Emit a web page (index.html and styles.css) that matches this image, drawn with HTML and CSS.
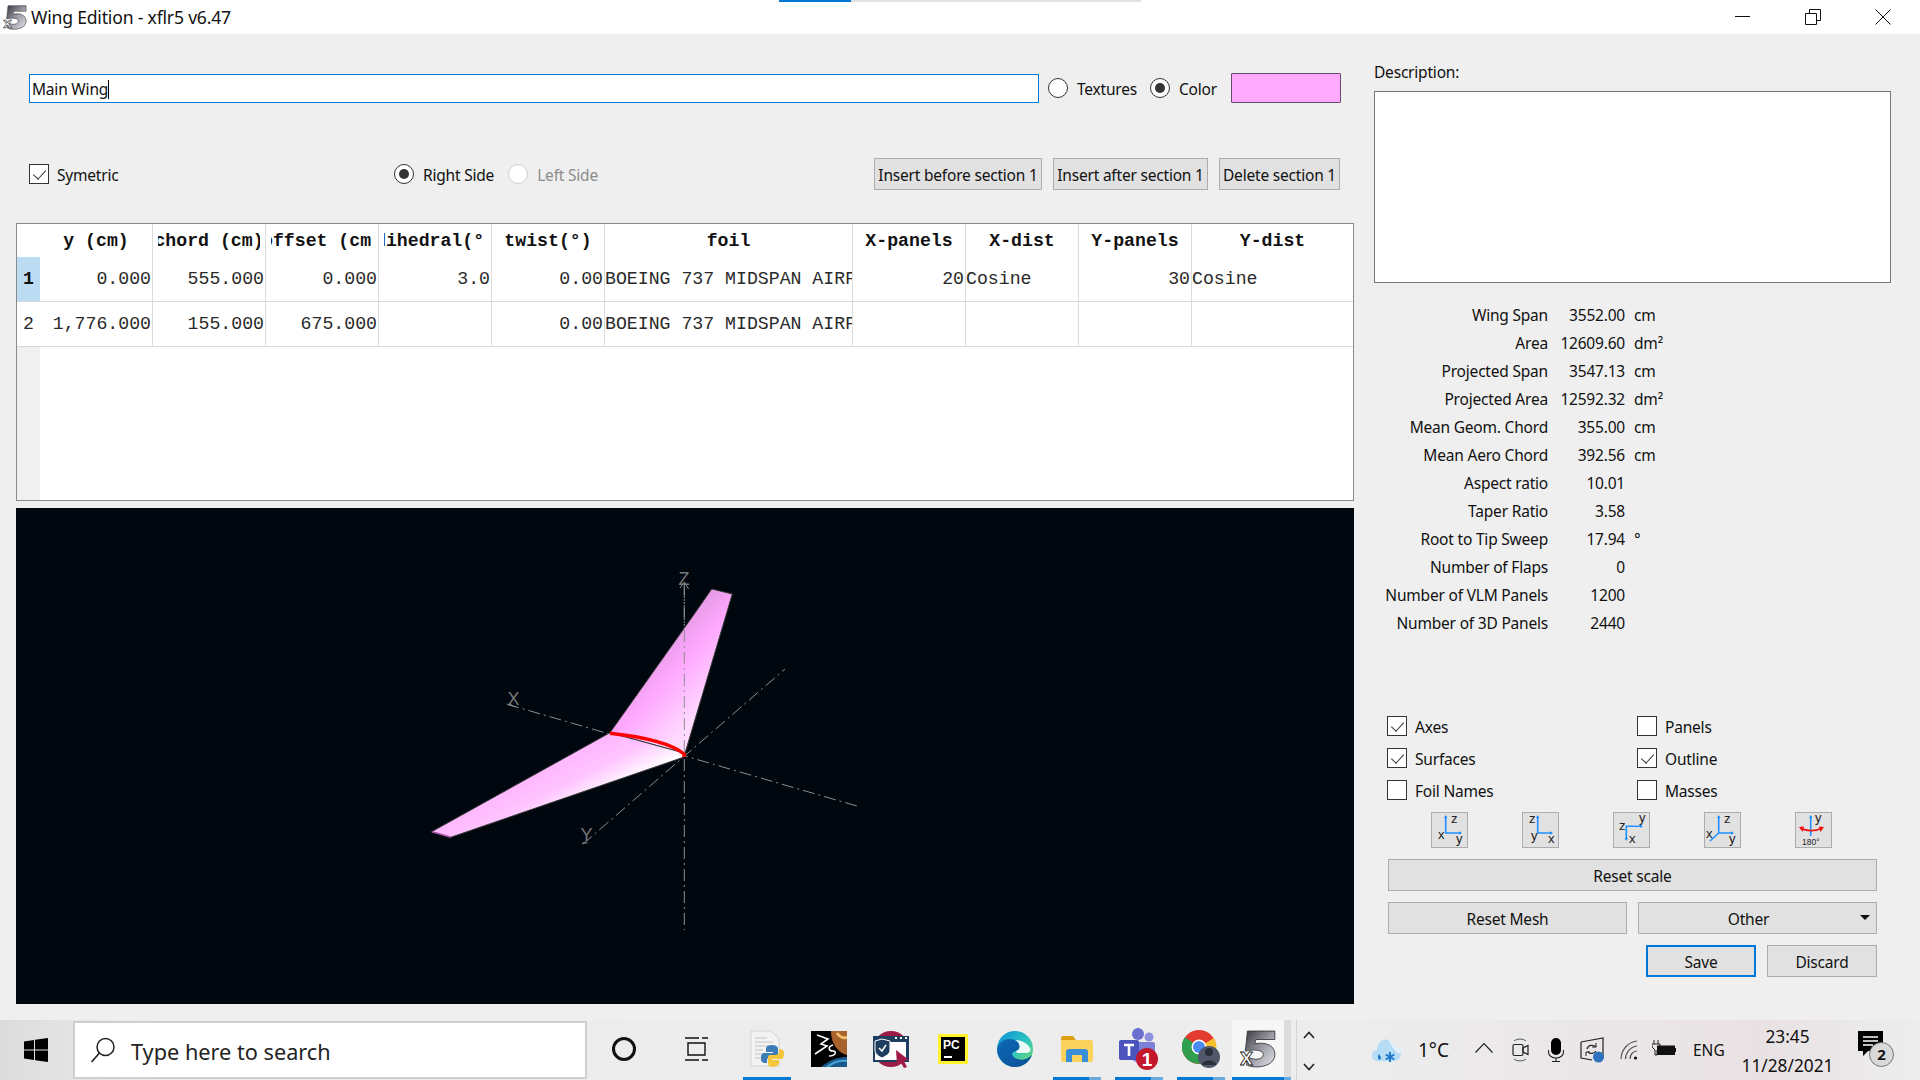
FILE: index.html
```html
<!DOCTYPE html>
<html lang="en">
<head>
<meta charset="utf-8">
<title>Wing Edition - xflr5 v6.47</title>
<link rel="stylesheet" href="styles.css">
</head>
<body>
<svg class="defs" width="0" height="0">
  <defs>
    <linearGradient id="g5" x1="0" y1="0" x2="1" y2="1"><stop offset="0" stop-color="#3a3a44"/><stop offset=".5" stop-color="#9a9aa4"/><stop offset="1" stop-color="#e6e6ee"/></linearGradient>
    <symbol id="logo" viewBox="0 0 34 36">
      <path d="M7 1H33V9H15L14 13C25 11 33 15 33 23C33 31 25 35 15 35C11 35 8 34 6 33L8 26C14 29 22 28 22 23C22 19 13 18 5 20Z" fill="url(#g5)" stroke="#333" stroke-width=".8"/>
      <text x="0" y="33" class="logo-x">x</text>
    </symbol>
  </defs>
</svg>

<header class="titlebar">
  <svg class="title-logo" width="24" height="25"><use href="#logo"/></svg>
  <span class="title-text">Wing Edition - xflr5 v6.47</span>
  <div class="progress"><div class="progress-on"></div></div>
  <div class="winctl">
    <svg width="16" height="16" viewBox="0 0 16 16"><path d="M0 7.5H15" class="wc"/></svg>
    <svg width="16" height="16" viewBox="0 0 16 16"><path d="M.5 4.5H11.5V15.5H.5ZM4.5 4.5V.5H15.5V11.5H11.5" class="wc"/></svg>
    <svg width="16" height="16" viewBox="0 0 16 16"><path d="M.5 .5L15.5 15.5M15.5 .5L.5 15.5" class="wc"/></svg>
  </div>
</header>

<main class="app">
  <section class="left">
    <div class="name-row">
      <div class="name-input">Main Wing<i class="caret"></i></div>
      <label class="opt o-tex"><span class="radio"></span>Textures</label>
      <label class="opt o-col"><span class="radio on"></span>Color</label>
      <div class="swatch"></div>
    </div>
    <div class="tool-row">
      <label class="opt o-sym"><span class="check on"></span>Symetric</label>
      <label class="opt o-right"><span class="radio on"></span>Right Side</label>
      <label class="opt o-left dis"><span class="radio dis"></span>Left Side</label>
      <div class="tool-btns">
        <button class="btn b-before">Insert before section 1</button>
        <button class="btn b-after">Insert after section 1</button>
        <button class="btn b-del">Delete section 1</button>
      </div>
    </div>

    <div class="table">
      <div class="tr thead">
        <div class="td rh"></div>
        <div class="td th"><span>y (cm)</span></div>
        <div class="td th"><span>chord (cm)</span></div>
        <div class="td th"><span>offset (cm)</span></div>
        <div class="td th"><span>dihedral(°)</span></div>
        <div class="td th"><span>twist(°)</span></div>
        <div class="td th"><span>foil</span></div>
        <div class="td th"><span>X-panels</span></div>
        <div class="td th"><span>X-dist</span></div>
        <div class="td th"><span>Y-panels</span></div>
        <div class="td th"><span>Y-dist</span></div>
      </div>
      <div class="tr">
        <div class="td rh sel">1</div>
        <div class="td n">0.000</div><div class="td n">555.000</div><div class="td n">0.000</div><div class="td n">3.0</div><div class="td n">0.00</div>
        <div class="td">BOEING 737 MIDSPAN AIRFOIL</div>
        <div class="td n">20</div><div class="td">Cosine</div><div class="td n">30</div><div class="td">Cosine</div>
      </div>
      <div class="tr">
        <div class="td rh">2</div>
        <div class="td n">1,776.000</div><div class="td n">155.000</div><div class="td n">675.000</div><div class="td n"></div><div class="td n">0.00</div>
        <div class="td">BOEING 737 MIDSPAN AIRFOIL</div>
        <div class="td"></div><div class="td"></div><div class="td"></div><div class="td"></div>
      </div>
      <div class="tfill"><div class="tfill-head"></div></div>
    </div>

    <div class="view3d">
      <svg width="1338" height="496" viewBox="16 508 1338 496">
        <defs>
          <linearGradient id="wu" gradientUnits="userSpaceOnUse" x1="650" y1="640" x2="715" y2="700"><stop offset="0" stop-color="#dc96dc"/><stop offset=".45" stop-color="#ffa8ff"/><stop offset="1" stop-color="#ffdcff"/></linearGradient>
          <linearGradient id="wl" gradientUnits="userSpaceOnUse" x1="545" y1="755" x2="575" y2="812"><stop offset="0" stop-color="#ffb0ff"/><stop offset=".55" stop-color="#ffc4ff"/><stop offset="1" stop-color="#ffffff"/></linearGradient>
        </defs>
        <g class="axis">
          <path d="M684.3 583V930"/>
          <path d="M507.3 704.3L859.3 806.7"/>
          <path d="M582.7 844.3L785 669"/>
        </g>
        <path d="M680 588L684.3 582L688.5 589M512 705L507.3 704.3L516 707M582 843L587.5 843" class="axhead"/>
        <path d="M711.7 589L732.3 594L685 753.3L610 732.7L695 613Z" fill="url(#wu)" stroke="#3a3a3a" stroke-width="1"/>
        <path d="M610 732.7L431.7 831.7L450.7 837.3L683.3 757.3L685 753.3Z" fill="url(#wl)" stroke="#3a3a3a" stroke-width="1"/>
        <path d="M431.7 831.7L450.7 837.3" stroke="#a050a0" stroke-width="1.5"/>
        <path d="M684.3 586V755" class="axis-front"/>
        <path d="M610 733.3C635 736 668 741 684 754L684 757" fill="none" stroke="#ff0000" stroke-width="3.5"/>
        <text x="684" y="585" class="axl">Z</text>
        <text x="513.5" y="705" class="axl">X</text>
        <text x="586.5" y="841" class="axl">Y</text>
      </svg>
    </div>
  </section>

  <aside class="right">
    <div class="desc-label">Description:</div>
    <div class="desc-box"></div>

    <div class="info">
      <span>Wing Span</span><b>3552.00</b><em>cm</em>
      <span>Area</span><b>12609.60</b><em>dm²</em>
      <span>Projected Span</span><b>3547.13</b><em>cm</em>
      <span>Projected Area</span><b>12592.32</b><em>dm²</em>
      <span>Mean Geom. Chord</span><b>355.00</b><em>cm</em>
      <span>Mean Aero Chord</span><b>392.56</b><em>cm</em>
      <span>Aspect ratio</span><b>10.01</b><em></em>
      <span>Taper Ratio</span><b>3.58</b><em></em>
      <span>Root to Tip Sweep</span><b>17.94</b><em>°</em>
      <span>Number of Flaps</span><b>0</b><em></em>
      <span>Number of VLM Panels</span><b>1200</b><em></em>
      <span>Number of 3D Panels</span><b>2440</b><em></em>
    </div>

    <div class="controls">
      <div class="checks">
        <label class="opt"><span class="check on"></span>Axes</label>
        <label class="opt"><span class="check"></span>Panels</label>
        <label class="opt"><span class="check on"></span>Surfaces</label>
        <label class="opt"><span class="check on"></span>Outline</label>
        <label class="opt"><span class="check"></span>Foil Names</label>
        <label class="opt"><span class="check"></span>Masses</label>
      </div>
      <div class="view-btns">
        <button class="vbtn"><svg width="35" height="34" viewBox="1 1 35 34">
          <path d="M14.7 4V21H30" class="ax"/><path d="M13 6L14.7 3L16.4 6ZM28 19.3L31 21L28 22.7Z" class="axf"/>
          <text x="20" y="11" class="vt">z</text><text x="7" y="27" class="vt">x</text><text x="25" y="31" class="vt">y</text></svg></button>
        <button class="vbtn"><svg width="35" height="34" viewBox="1 1 35 34">
          <path d="M15.7 4V21H30" class="ax"/><path d="M14 6L15.7 3L17.4 6ZM28 19.3L31 21L28 22.7Z" class="axf"/>
          <text x="7" y="11" class="vt">z</text><text x="9" y="28" class="vt">y</text><text x="26" y="31" class="vt">x</text></svg></button>
        <button class="vbtn"><svg width="35" height="34" viewBox="1 1 35 34">
          <path d="M13.3 28V14.3H29" class="ax"/><path d="M27 12.6L30 14.3L27 16ZM11.6 26L13.3 29L15 26Z" class="axf"/>
          <text x="6" y="18" class="vt">z</text><text x="26" y="10" class="vt">y</text><text x="16" y="31" class="vt">x</text></svg></button>
        <button class="vbtn"><svg width="35" height="34" viewBox="1 1 35 34">
          <path d="M14.7 4V21H29M14.7 21L6 29" class="ax"/><path d="M13 6L14.7 3L16.4 6ZM27 19.3L30 21L27 22.7Z" class="axf"/>
          <text x="20" y="11" class="vt">z</text><text x="2" y="26" class="vt">x</text><text x="25" y="31" class="vt">y</text></svg></button>
        <button class="vbtn"><svg width="35" height="34" viewBox="1 1 35 34">
          <path d="M15.7 4V24" class="ax"/><path d="M14 6L15.7 3L17.4 6Z" class="axf"/>
          <path d="M6 16C11 19.5 21 19.5 27 16" fill="none" stroke="#f01010" stroke-width="1.6"/><path d="M4 15L9 14.5L7.5 20ZM29 15L24 14.5L25.5 20Z" fill="#f01010"/>
          <text x="20" y="10" class="vt">y</text><text x="7" y="33" class="vt180">180°</text></svg></button>
      </div>
      <button class="btn b-wide">Reset scale</button>
      <div class="two">
        <button class="btn">Reset Mesh</button>
        <button class="btn b-menu">Other<i class="tri"></i></button>
      </div>
      <div class="save-row">
        <button class="btn b-save">Save</button>
        <button class="btn b-disc">Discard</button>
      </div>
    </div>
  </aside>
</main>

<footer class="taskbar">
  <div class="start"><svg width="24" height="24" viewBox="0 0 24 24"><path d="M0 3.4L10 2V11.4H0ZM11 1.8L24 0V11.4H11ZM0 12.6H10V22L0 20.6ZM11 12.6H24V24L11 22.2Z" fill="#000"/></svg></div>
  <div class="search">
    <svg width="26" height="26" viewBox="0 0 26 26"><circle cx="15.5" cy="10" r="8.5" fill="none" stroke="#222" stroke-width="1.5"/><path d="M9.5 16L1.5 25" stroke="#222" stroke-width="1.7"/></svg>
    <span>Type here to search</span>
  </div>
  <div class="slot s-cortana"><span class="cortana"></span></div>
  <div class="slot s-view"><svg width="23" height="24" viewBox="0 0 23 24"><path d="M0 1H14M0 23H14M3 6H20V18H3Z M17 1H23M17 23H23" fill="none" stroke="#111" stroke-width="1.4"/></svg></div>

  <div class="slot act">
    <svg width="36" height="38" viewBox="0 0 36 38"><path d="M2 1H22L30 9V36H2Z" fill="#f2f2f2" stroke="#d5d5d5"/><path d="M6 8H18M6 12H24M6 16H20M6 20H14M6 24H14M6 28H18" stroke="#c4c4c4" stroke-width="1.2"/>
    <path d="M23 15C17 15 17 18 17 20V22H24V23H15C12 23 12 27 12 29C12 32 14 33 16 33H18V30C18 28 20 27 22 27H27C29 27 29 25 29 24V19C29 16 26 15 23 15Z" fill="#3a7bb8"/><path d="M23 37C29 37 30 34 30 32V30H23V29H32C35 29 35 25 35 23C35 20 33 19 31 19H30V22C30 24 28 25 26 25H21C19 25 19 27 19 28V33C19 36 21 37 23 37Z" fill="#f5c63c"/></svg>
  </div>
  <div class="slot">
    <svg width="36" height="36" viewBox="0 0 36 36"><rect width="36" height="36" fill="#000"/><path d="M36 0V24C28 22 20 14 20 0Z" fill="#a8632c"/><path d="M36 6C32 8 28 5 26 2" stroke="#f0c070" stroke-width="3" fill="none"/><path d="M10 36C20 28 28 26 36 26V36Z" fill="#185a8c"/><path d="M16 36C24 30 30 29 36 30" stroke="#49a4d8" stroke-width="2" fill="none"/><path d="M6 4L17 8L10 13L16 15L4 23M22 14C16 16 18 20 22 20C26 20 25 25 18 25" fill="none" stroke="#fff" stroke-width="1.6"/></svg>
  </div>
  <div class="slot">
    <svg width="36" height="42" viewBox="0 0 36 42"><circle cx="18" cy="21" r="18" fill="#9c1c48"/><path d="M0 8H36V34H0Z" fill="#1d3e5e"/><path d="M2 14H33V32H2Z" fill="#fff"/><path d="M9 11L17 13V22C17 26 13 28 9 30C5 28 2 26 2 22V13Z" fill="#1d3e5e" stroke="#fff"/><path d="M6 20L9 23L13 17" fill="none" stroke="#fff" stroke-width="1.5"/><path d="M22 10H24M27 10H29M32 10H34" stroke="#fff" stroke-width="2"/><path d="M23 22L36 32L31 33L34 39L31 40L28 35L24 37Z" fill="#a01c48"/></svg>
  </div>
  <div class="slot">
    <svg width="30" height="30" viewBox="0 0 30 30"><rect width="30" height="30" fill="#fff22e"/><rect x="3" y="3" width="24" height="24" fill="#000"/><text x="5" y="15" class="pc">PC</text><path d="M6 23H14" stroke="#fff" stroke-width="2"/></svg>
  </div>
  <div class="slot">
    <svg width="36" height="36" viewBox="0 0 36 36"><defs><linearGradient id="ed" x1="0" y1="0" x2="1" y2="1"><stop offset="0" stop-color="#0b8fd6"/><stop offset=".55" stop-color="#2fc5c0"/><stop offset="1" stop-color="#7ddc5a"/></linearGradient><linearGradient id="ed2" x1="0" y1="0" x2="1" y2="1"><stop offset="0" stop-color="#0c69b8"/><stop offset="1" stop-color="#0d4f95"/></linearGradient></defs><circle cx="18" cy="18" r="18" fill="url(#ed)"/><path d="M0 18C2 9 11 6 18 9C24 12 24 19 19 20C14 21 14 24 18 27C23 30 30 29 35 24C32 32 25 36 18 36C8 36 0 28 0 18Z" fill="url(#ed2)"/><path d="M19 20C24 19 24 12 18 9C21 9 29 10 33 17C35 21 31 22 27 22H20Z" fill="#fff" opacity=".9"/></svg>
  </div>
  <div class="slot act2">
    <svg width="32" height="26" viewBox="0 0 32 26"><path d="M0 2C0 1 1 0 2 0H12L15 4H0Z" fill="#dc9f10"/><path d="M0 4H30C31 4 32 5 32 6V24C32 25 31 26 30 26H2C1 26 0 25 0 24Z" fill="#fbd35c"/><path d="M5 26V16C5 14 6 13 8 13H24C26 13 27 14 27 16V26H21V19H11V26Z" fill="#3a8dd8"/></svg>
  </div>
  <div class="slot act2">
    <svg width="40" height="44" viewBox="0 0 40 44"><circle cx="19" cy="7" r="6" fill="#6a6fd0"/><circle cx="30" cy="10" r="4.5" fill="#8d91de"/><path d="M12 15H34C36 15 36 17 36 18V27C36 32 32 35 27 35H18C14 35 12 31 12 27Z" fill="#7b80d8"/><rect y="13" width="20" height="20" rx="2" fill="#4b53bc"/><path d="M5 18H15M10 18V29" stroke="#fff" stroke-width="2.6"/><circle cx="28" cy="32" r="11" fill="#c4172c"/><text x="28" y="39" class="tm">1</text></svg>
  </div>
  <div class="slot act2">
    <svg width="38" height="38" viewBox="0 0 38 38"><circle cx="17" cy="17" r="17" fill="#e33b2e"/><path d="M17 17L32 8A17 17 0 0 1 22 33Z" fill="#fbc02d"/><path d="M17 17L22 33A17 17 0 0 1 2 25Z" fill="#2e9e4f"/><path d="M17 17L2 25A17 17 0 0 1 3 7Z" fill="#2e9e4f"/><circle cx="17" cy="17" r="7.5" fill="#fff"/><circle cx="17" cy="17" r="6" fill="#4a8af4"/><circle cx="27" cy="27" r="11" fill="#50586a"/><circle cx="27" cy="22" r="4" fill="#2b2f3a"/><path d="M20 35C20 29 34 29 34 35Z" fill="#2b2f3a"/></svg>
  </div>
  <div class="slot s-x act3">
    <svg width="36" height="38"><use href="#logo"/></svg>
  </div>

  <div class="scroller">
    <svg width="12" height="8" viewBox="0 0 12 8"><path d="M1 7L6 1.5L11 7" fill="none" stroke="#222" stroke-width="1.6"/></svg>
    <svg width="12" height="8" viewBox="0 0 12 8"><path d="M1 1L6 6.5L11 1" fill="none" stroke="#222" stroke-width="1.6"/></svg>
  </div>

  <div class="tray">
    <svg class="t-cloud" width="30" height="26" viewBox="0 0 30 26"><path d="M7 24C2 24 0 20 1 17C2 14 4 13 6 13C6 6 12 1 17 3C20 4 22 6 22 9C27 9 30 13 30 17C30 21 27 24 23 24Z" fill="#b6dcf6"/><path d="M17 3C20 4 22 6 22 9C27 9 30 13 30 17C24 16 22 10 17 3Z" fill="#e3f2fc"/><path d="M8 17C10 20 11 21 8.500 23C6 21 7 19 8 17Z" fill="#1e78c8"/><path d="M14 15V25M9.700 17.500L18.300 22.500M18.300 17.500L9.700 22.500" transform="translate(5 0)" stroke="#1e78c8" stroke-width="2"/></svg>
    <span class="t-temp">1°C</span>
    <svg class="t-chev" width="18" height="11" viewBox="0 0 18 11"><path d="M.5 10.500L9 1.500L17.500 10.500" fill="none" stroke="#222" stroke-width="1.2"/></svg>
    <svg class="t-cam" width="17" height="24" viewBox="0 0 17 24"><rect x="1" y="6.500" width="10" height="11" rx="1.500" fill="none" stroke="#222" stroke-width="1.200"/><path d="M11 10L16 7.500V16.500L11 14Z" fill="none" stroke="#222" stroke-width="1.200"/><path d="M2 3C5 .5 11 .5 14 3M2 21C5 23.500 11 23.500 14 21" fill="none" stroke="#555"/></svg>
    <svg class="t-mic" width="16" height="24" viewBox="0 0 16 24"><rect x="3" y="0" width="10" height="17" rx="5" fill="#000"/><path d="M.5 12V14C.5 22 15.500 22 15.500 14V12M8 20V23.500M4 23.500H12" fill="none" stroke="#222" stroke-width="1.100"/></svg>
    <svg class="t-sync" width="24" height="26" viewBox="0 0 24 26"><path d="M1 5L23 1V20H20M1 5V21L12 23" fill="none" stroke="#222" stroke-width="1.200"/><path d="M7 12C8 8 13 7 16 10M16 14C14 17 10 17 8 15" fill="none" stroke="#222" stroke-width="1.200"/><path d="M16 6V10H12M6 19V15H10" fill="none" stroke="#222"/><circle cx="18.500" cy="20" r="5.500" fill="#2f73c0"/></svg>
    <svg class="t-wifi" width="18" height="20" viewBox="0 0 18 20"><path d="M1 19C1 10 8 2 17 1M5.500 19C5.500 13 10 7 17 6M10 19C10 15 13 11 17 11" fill="none" stroke="#555" stroke-width="1.200"/><circle cx="15.500" cy="18" r="1.600" fill="#111"/></svg>
    <svg class="t-batt" width="24" height="20" viewBox="0 0 24 20"><path d="M2 0V4M6 0V4M0 4H8V7L5 10V15H3V10L0 7Z" fill="none" stroke="#222"/><rect x="5" y="5.500" width="18" height="9.500" fill="#111"/><rect x="23" y="8" width="1" height="4" fill="#111"/></svg>
    <span class="t-lang">ENG</span>
    <div class="t-clock"><span>23:45</span><span>11/28/2021</span></div>
    <div class="t-notif">
      <svg width="26" height="26" viewBox="0 0 26 26"><path d="M0 0H25V20H10L5 25V20H0Z" fill="#000"/><path d="M5 6H20M5 10H20M5 14H15" stroke="#fff" stroke-width="1.300"/></svg>
      <span class="badge">2</span>
    </div>
  </div>
</footer>
</body>
</html>
```

FILE: styles.css
```css
* { box-sizing: border-box; }
html, body { margin: 0; padding: 0; }
body {
  width: 1920px;
  height: 1080px;
  overflow: hidden;
  display: flex;
  flex-direction: column;
  background: #efefef;
  font-family: "Noto Sans", sans-serif;
  font-size: 15.500px;
  letter-spacing: -.2px;
  color: #111;
}
.defs { position: absolute; }
.logo-x { font: 700 22px "Liberation Sans", sans-serif; fill: #fff; stroke: #222; stroke-width: .8; }

/* title bar */
.titlebar {
  position: relative;
  height: 34px;
  flex: none;
  background: #fff;
  display: flex;
  align-items: center;
  padding-left: 3px;
}
.title-logo { flex: none; }
.title-text { margin-left: 4px; font-size: 17.600px; color: #111; }
.progress {
  position: absolute;
  left: 779px;
  top: 0;
  width: 362px;
  height: 2px;
  background: #e2e2e2;
}
.progress-on { width: 72px; height: 2px; background: #0078d7; }
.winctl {
  margin-left: auto;
  display: flex;
  gap: 54px;
  padding-right: 29px;
}
.wc { fill: none; stroke: #111; stroke-width: 1; }

/* layout */
.app { flex: 1; display: flex; min-height: 0; }
.left { width: 1354px; padding-left: 16px; flex: none; }
.right { width: 566px; flex: none; padding-left: 20px; }

/* options */
.opt { display: flex; align-items: center; gap: 9px; white-space: nowrap; height: 20px; padding-top: 2px; }
.opt.dis { color: #8c8c8c; }
.radio, .check { flex: none; width: 20px; height: 20px; margin-top: -2px; background: #fff; display: block; position: relative; }
.radio { border-radius: 50%; border: 1px solid #333; }
.radio.dis { border-color: #cfcfcf; }
.radio.on::after {
  content: "";
  position: absolute;
  left: 4px;
  top: 4px;
  width: 10px;
  height: 10px;
  border-radius: 50%;
  background: #333;
}
.check { border: 1px solid #333; }
.check.on::after {
  content: "";
  position: absolute;
  left: 6px;
  top: 2px;
  width: 6px;
  height: 11px;
  border: solid #333;
  border-width: 0 1.500px 1.500px 0;
  transform: rotate(42deg);
}

/* top rows */
.name-row { display: flex; align-items: center; height: 30px; margin-top: 39px; padding-left: 13px; }
.name-input {
  width: 1010px;
  height: 29px;
  border: 1px solid #0078d7;
  background: #fff;
  padding-left: 2px;
  line-height: 28px;
}
.caret { display: inline-block; width: 1px; height: 19px; background: #000; vertical-align: -4px; }
.o-tex { margin-left: 9px; }
.o-col { margin-left: 13px; }
.swatch { width: 110px; height: 30px; margin-left: 14px; background: #ffaaff; border: 1px solid #6a4a6a; border-radius: 1px; }
.tool-row { display: flex; align-items: center; height: 32px; margin-top: 55px; padding-left: 13px; }
.o-sym { width: 365px; gap: 8px; }
.o-left { margin-left: 14px; }
.tool-btns { display: flex; gap: 11px; margin-left: auto; padding-right: 14px; }
.btn {
  height: 32px;
  padding: 1px 0 0;
  background: #e1e1e1;
  border: 1px solid #adadad;
  font: inherit;
  letter-spacing: inherit;
  color: #111;
}
.b-before { width: 168px; }
.b-after { width: 155px; }
.b-del { width: 121px; }

/* table */
.table {
  margin-top: 33px;
  height: 278px;
  width: 1338px;
  border: 1px solid #8a8a8a;
  background: #fff;
  display: flex;
  flex-direction: column;
  font: 18.200px "Liberation Mono", monospace;
  letter-spacing: 0;
  color: #2a2a2a;
}
.tr {
  display: grid;
  grid-template-columns: 23px repeat(5, 113px) 248px repeat(3, 113px) 1fr;
  height: 45px;
  flex: none;
  border-bottom: 1px solid #d8d8d8;
}
.thead { height: 33px; border-bottom: 0; font-weight: 700; color: #111; }
.td {
  display: flex;
  align-items: center;
  border-right: 1px solid #dcdcdc;
  overflow: hidden;
  white-space: nowrap;
  min-width: 0;
}
.td:last-child { border-right: 0; }
.td.n { justify-content: flex-end; padding-right: 1px; }
.th { padding: 0 5px; }
.th span { display: flex; justify-content: center; overflow: hidden; width: 100%; white-space: pre; }
.rh { justify-content: center; border-right: 0; }
.rh.sel { background: #bcdcf4; font-weight: 700; color: #111; }
.tfill { flex: 1; display: flex; }
.tfill-head { width: 23px; background: #f0f0f0; }

/* 3d view */
.view3d { margin-top: 7px; width: 1338px; height: 496px; background: #01070f; }
.view3d svg { display: block; }
.axis path { fill: none; stroke: #8a8f8f; stroke-width: 1; stroke-dasharray: 12 4 2 4; }
.axis-front { fill: none; stroke: #8a8f8f; stroke-width: 1; stroke-dasharray: 12 4 2 4; }
.axhead { fill: none; stroke: #8a8f8f; stroke-width: 1; }
.axl { font: 18px "Liberation Sans", sans-serif; fill: #777; text-anchor: middle; }

/* right column */
.desc-label { margin-top: 27px; height: 22px; line-height: 23px; }
.desc-box { margin-top: 8px; width: 517px; height: 192px; background: #fff; border: 1px solid #777; }
.info {
  display: grid;
  grid-template-columns: 174px 77px auto;
  grid-auto-rows: 28px;
  margin-top: 18px;
  line-height: 28px;
  white-space: nowrap;
}
.info span { text-align: right; }
.info b { font-weight: 400; text-align: right; }
.info em { font-style: normal; padding-left: 9px; }
.controls { margin-top: 79px; padding-left: 14px; width: 503px; }
.checks { display: grid; grid-template-columns: 250px 1fr; grid-auto-rows: 32px; margin-left: -1px; }
.checks .opt { gap: 8px; }
.view-btns { display: flex; gap: 54px; padding-left: 43px; height: 36px; }
.vbtn {
  width: 37px;
  height: 36px;
  padding: 0;
  background: #e1e1e1;
  border: 1px solid #adadad;
  flex: none;
}
.vbtn svg { display: block; }
.ax { fill: none; stroke: #1e90ff; stroke-width: 1.600; }
.axf { fill: #1e90ff; }
.vt { font: 13px "Liberation Sans", sans-serif; letter-spacing: 0; fill: #222; }
.vt180 { font: 8.500px "Liberation Sans", sans-serif; letter-spacing: 0; fill: #222; }
.b-wide { display: block; width: 489px; margin-top: 11px; }
.two { display: flex; gap: 11px; margin-top: 11px; width: 489px; }
.two .btn { width: 239px; }
.b-menu { position: relative; padding-right: 18px; }
.tri {
  position: absolute;
  right: 6px;
  top: 12px;
  border: 5px solid transparent;
  border-top: 5px solid #111;
  border-bottom: 0;
}
.save-row { display: flex; justify-content: flex-end; gap: 11px; margin-top: 11px; width: 489px; }
.b-save { width: 110px; border: 2px solid #0078d7; }
.b-disc { width: 110px; }

/* taskbar */
.taskbar {
  height: 60px;
  flex: none;
  margin-top: 16px;
  display: flex;
  align-items: center;
  letter-spacing: 0;
  background: linear-gradient(90deg, #dcdcdc 0, #ececec 8%, #ededed 70%, #e9e2e4 92%, #ededed 100%);
}
.start { width: 73px; padding-left: 24px; display: flex; }
.search {
  width: 514px;
  height: 58px;
  background: #fff;
  border: 2px solid #cfcfcf;
  display: flex;
  align-items: center;
  padding: 2px 0 0 15px;
  gap: 15px;
  font-size: 21.700px;
  color: #222;
}
.search svg { margin-top: -3px; }
.slot {
  position: relative;
  width: 62px;
  height: 60px;
  flex: none;
  display: flex;
  align-items: center;
  justify-content: center;
  padding-bottom: 3px;
}
.s-cortana { width: 73px; }
.s-view { width: 76px; justify-content: flex-start; padding-left: 25px; }
.cortana { display: block; width: 24px; height: 24px; border-radius: 50%; border: 3.500px solid #111; }
.act::after, .act2::after, .act3::after {
  content: "";
  position: absolute;
  bottom: 0;
  left: 7px;
  right: 7px;
  height: 3px;
  background: #0078d4;
}
.act2::after { background: linear-gradient(90deg, #0078d4 75%, #6aa9dc 75%); }
.s-x { width: 59px; justify-content: flex-start; padding-left: 8px; background: linear-gradient(90deg, #f7f7f7 52px, #dcdcdc 52px); }
.act3::after { left: 0; right: 0; background: linear-gradient(90deg, #0078d4 52px, #6aa9dc 52px); }
.scroller {
  width: 28px;
  height: 60px;
  margin-left: 5px;
  flex: none;
  border-left: 1px solid #d4d4d4;
  display: flex;
  flex-direction: column;
  align-items: center;
  justify-content: space-between;
  padding: 11px 3px 9px 0;
}
.tray { display: flex; align-items: center; height: 60px; padding-left: 47px; color: #111; }
.tray > * { flex: none; }
.t-temp { margin-left: 17px; width: 30px; font-size: 19px; white-space: nowrap; }
.t-chev { margin-left: 27px; margin-bottom: 6px; }
.t-cam { margin-left: 19px; }
.t-mic { margin-left: 19px; }
.t-sync { margin-left: 16px; }
.t-wifi { margin-left: 16px; }
.t-batt { margin-left: 14px; }
.t-lang { margin-left: 17px; width: 33px; font-size: 15.500px; white-space: nowrap; }
.t-clock {
  margin-left: 16px;
  width: 91px;
  padding-top: 1px;
  display: flex;
  flex-direction: column;
  align-items: center;
  font-size: 17.300px;
  line-height: 29px;
  white-space: nowrap;
}
.t-notif { position: relative; margin-left: 25px; width: 36px; height: 36px; margin-bottom: 2px; }
.t-notif svg { display: block; }
.badge {
  position: absolute;
  left: 11px;
  top: 11px;
  width: 25px;
  height: 25px;
  border-radius: 50%;
  border: 1px solid #777;
  background: #d9d9d9;
  font-size: 15px;
  font-weight: 700;
  line-height: 22px;
  text-align: center;
}
.pc { font: 700 12px "Liberation Sans", sans-serif; fill: #fff; }
.tm { font: 700 19px "Liberation Sans", sans-serif; fill: #fff; text-anchor: middle; }
```
